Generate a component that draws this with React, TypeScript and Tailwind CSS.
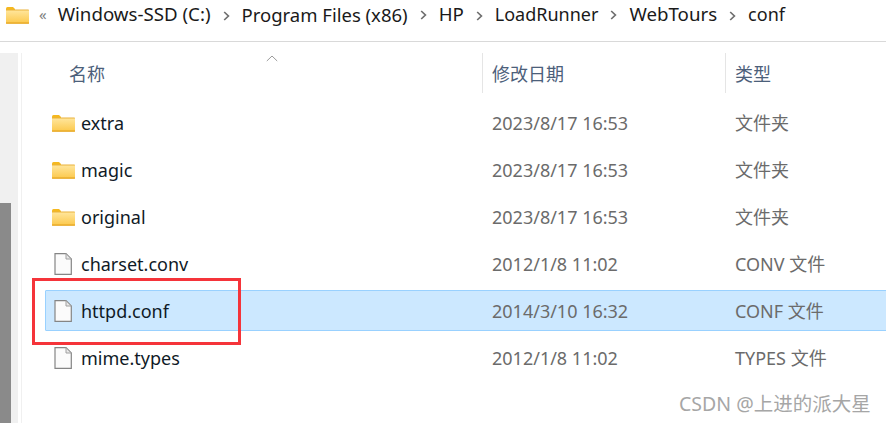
const font = { fontFamily: '"Noto Sans", "Noto Sans CJK SC", sans-serif' };

function Folder({ className = "" }: { className?: string }) {
  return (
    <svg width="23" height="18" viewBox="0 0 23 18" className={className}>
      <path d="M0 2.5 Q0 1 1.5 1 H7 L9 3 V5 H0 Z" fill="#f5b81f" />
      <rect x="0" y="3.5" width="23" height="14" rx="0.8" fill="#e9b23c" />
      <rect x="0" y="4.5" width="23" height="12.2" fill="url(#fg)" />
      <rect x="0" y="16.5" width="23" height="1.2" fill="#e8a820" />
      <defs>
        <linearGradient id="fg" x1="0" y1="0" x2="0" y2="1">
          <stop offset="0" stopColor="#ffe59a" />
          <stop offset="1" stopColor="#fcca50" />
        </linearGradient>
      </defs>
    </svg>
  );
}

function FileIcon() {
  return (
    <svg width="18" height="22" viewBox="0 0 18 22">
      <path d="M1 .7 H12 L17.3 6 V21.3 H1 Z" fill="#fbfbfb" stroke="#858585" strokeWidth="1.2" />
      <path d="M12 .7 V6 H17.3 Z" fill="#e8e8e8" stroke="#a0a0a0" strokeWidth="1" />
    </svg>
  );
}

function Chevron() {
  return (
    <svg width="7" height="10" viewBox="0 0 7 10" className="shrink-0 mx-[12px] mt-[2px]">
      <path d="M1.2 1 L5.4 5 L1.2 9" fill="none" stroke="#6f6f6f" strokeWidth="1.7" />
    </svg>
  );
}

const crumbs = [
  { label: "Program Files (x86)", size: "text-[18.5px]" },
  { label: "HP", size: "text-[18.7px]" },
  { label: "LoadRunner", size: "text-[18px]" },
  { label: "WebTours", size: "text-[18.7px]" },
  { label: "conf", size: "text-[18px]" },
];

const rows = [
  { name: "extra", date: "2023/8/17 16:53", type: "文件夹", folder: true },
  { name: "magic", date: "2023/8/17 16:53", type: "文件夹", folder: true },
  { name: "original", date: "2023/8/17 16:53", type: "文件夹", folder: true },
  { name: "charset.conv", date: "2012/1/8 11:02", type: "CONV 文件", folder: false },
  { name: "httpd.conf", date: "2014/3/10 16:32", type: "CONF 文件", folder: false, selected: true },
  { name: "mime.types", date: "2012/1/8 11:02", type: "TYPES 文件", folder: false },
];

export default function App() {
  return (
    <div className="relative w-[886px] h-[423px] overflow-hidden bg-white text-[18px] text-[#1a1a1a]" style={font}>
      <div className="h-[42px] border-b border-[#d9d9d9] flex items-center pl-[6px] pb-[12px]">
        <Folder />
        <span className="ml-[10px] mr-[11px] text-[15px] leading-none text-[#808080]">«</span>
        <span className="whitespace-nowrap text-[18.7px]">Windows-SSD (C:)</span>
        {crumbs.map((c) => (
          <span key={c.label} className="flex items-center">
            <Chevron />
            <span className={`whitespace-nowrap ${c.size}`}>{c.label}</span>
          </span>
        ))}
      </div>
      <div className="flex h-[381px]">
        <div className="w-[18px] mt-[11px] bg-[#f0f0f0] shrink-0 flex flex-col justify-end">
          <div className="w-[11px] h-[220px] bg-[#8a8a8a]" />
        </div>
        <div className="w-[3px] mt-[11px] bg-white shrink-0" />
        <div className="w-[1px] mt-[11px] bg-[#f0f0f0] shrink-0" />
        <div className="flex-1 min-w-0">
          <div className="relative flex h-[40px] mt-[11px] text-[#4c607a] leading-[42px]">
            <div className="w-[461px] pl-[47px] border-r border-[#e5e5e5]">名称</div>
            <div className="w-[243px] pl-[9px] border-r border-[#e5e5e5]">修改日期</div>
            <div className="pl-[9px]">类型</div>
            <svg width="12" height="7" viewBox="0 0 12 7" className="absolute left-[244px] top-[2px]">
              <path d="M.8 6 L6 1 L11.2 6" fill="none" stroke="#9a9a9a" strokeWidth="1" />
            </svg>
          </div>
          <div className="pt-[9px]">
            {rows.map((r) => (
              <div
                key={r.name}
                className={`flex items-center h-[41px] mb-[6px] ml-[23px] -mr-[4px] pt-[1px] ${
                  r.selected ? "bg-[#cce8ff] border border-[#99d1ff] rounded-[1px]" : "border border-transparent"
                }`}
              >
                <div className="w-[35px] pl-[6px] shrink-0 flex justify-start">
                  {r.folder ? <Folder /> : <span className="pl-[2px] flex"><FileIcon /></span>}
                </div>
                <div className="w-[411px] shrink-0 text-[#0f1a26] whitespace-nowrap">{r.name}</div>
                <div className="w-[243px] shrink-0 text-[#6b6b6b] whitespace-nowrap">{r.date}</div>
                <div className="text-[#6b6b6b] whitespace-nowrap">{r.type}</div>
              </div>
            ))}
          </div>
        </div>
      </div>
      <div className="absolute left-[32px] top-[278px] w-[209px] h-[67px] border-[3px] border-[#f5343a]" />
      <div className="absolute left-[679px] top-[391px] text-[19.5px] leading-[26px] text-[#a6a6a6] whitespace-nowrap">
        CSDN @上进的派大星
      </div>
    </div>
  );
}
